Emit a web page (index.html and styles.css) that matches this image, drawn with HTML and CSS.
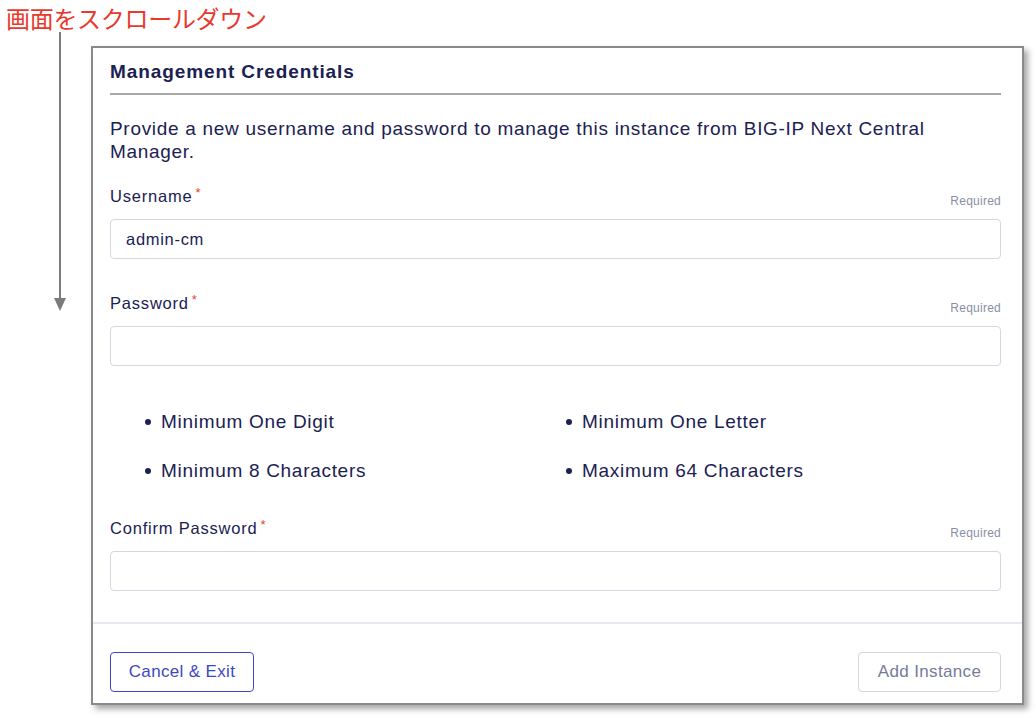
FILE: index.html
```html
<!DOCTYPE html>
<html lang="ja">
<head>
<meta charset="utf-8">
<title>Management Credentials</title>
<link rel="stylesheet" href="styles.css">
</head>
<body>
<div class="note">画面をスクロールダウン</div>
<div class="stage">
  <div class="arrow-col">
    <div class="arrow-line"></div>
    <div class="arrow-head"></div>
  </div>
  <div class="card">
    <div class="card-body">
      <h2 class="title">Management Credentials</h2>
      <p class="desc">Provide a new username and password to manage this instance from BIG-IP Next Central Manager.</p>

      <div class="field">
        <div class="label-row">
          <span class="label">Username<span class="star">*</span></span>
          <span class="req">Required</span>
        </div>
        <div class="input">admin-cm</div>
      </div>

      <div class="field">
        <div class="label-row">
          <span class="label">Password<span class="star">*</span></span>
          <span class="req">Required</span>
        </div>
        <div class="input"></div>
      </div>

      <ul class="rules">
        <li>Minimum One Digit</li>
        <li>Minimum One Letter</li>
        <li>Minimum 8 Characters</li>
        <li>Maximum 64 Characters</li>
      </ul>

      <div class="field field-confirm">
        <div class="label-row">
          <span class="label">Confirm Password<span class="star">*</span></span>
          <span class="req">Required</span>
        </div>
        <div class="input"></div>
      </div>
    </div>
    <div class="card-foot">
      <button class="btn btn-outline">Cancel &amp; Exit</button>
      <button class="btn btn-disabled">Add Instance</button>
    </div>
  </div>
</div>
</body>
</html>
```

FILE: styles.css
```css
* { box-sizing: border-box; }
html, body { margin: 0; padding: 0; background: #ffffff; }
body {
  font-family: "Liberation Sans", Arial, "Noto Sans CJK JP", sans-serif;
  color: #1b2152;
  width: 1036px;
  height: 718px;
  overflow: hidden;
}
.note {
  font-family: "Noto Sans CJK JP", sans-serif;
  color: #e8392c;
  font-size: 24px;
  line-height: 28px;
  height: 32px;
  padding: 4px 0 0 6px;
  letter-spacing: -0.3px;
}
.stage {
  display: flex;
  align-items: flex-start;
}
.arrow-col {
  width: 91px;
  display: flex;
  flex-direction: column;
  align-items: center;
  padding-left: 54px;
  padding-right: 25px;
}
.arrow-line {
  width: 2px;
  height: 266px;
  background: #7b7b7b;
}
.arrow-head {
  width: 0;
  height: 0;
  border-left: 6px solid transparent;
  border-right: 6px solid transparent;
  border-top: 13px solid #7b7b7b;
}
.card {
  margin-top: 14px;
  width: 933px;
  height: 659px;
  border: 2px solid #8a8a8a;
  background: #fff;
  box-shadow: 4px 4px 6px rgba(0,0,0,0.35);
  display: flex;
  flex-direction: column;
}
.card-body {
  padding: 12px 21px 0 17px;
  flex: 1;
  border-bottom: 2px solid #e8e9f0;
}
.title {
  margin: 0;
  font-size: 19px;
  font-weight: 700;
  letter-spacing: 0.9px;
  line-height: 24px;
  padding-bottom: 9px;
  border-bottom: 2px solid #a9a9a9;
  color: #1b2152;
}
.desc {
  margin: 0;
  padding-top: 22px;
  font-size: 19px;
  letter-spacing: 0.7px;
  line-height: 23px;
  color: #1b2152;
}
.field { margin-top: 33px; }
.desc + .field { margin-top: 22px; }
.label-row {
  display: flex;
  justify-content: space-between;
  align-items: flex-start;
  height: 34px;
}
.label {
  font-size: 16.5px;
  letter-spacing: 0.8px;
  line-height: 22px;
}
.star {
  color: #e0442f;
  font-size: 13px;
  position: relative;
  top: -5px;
  margin-left: 3px;
}
.req {
  font-size: 12px;
  letter-spacing: 0.25px;
  color: #8a8ea8;
  line-height: 14px;
  margin-top: 9px;
}
.input {
  height: 40px;
  border: 1px solid #d5d7e2;
  border-radius: 4px;
  padding: 0 15px;
  font-size: 16.5px;
  letter-spacing: 0.7px;
  line-height: 38px;
  color: #1b2152;
}
.rules {
  list-style: none;
  margin: 0;
  padding: 45px 0 0 35px;
  display: grid;
  grid-template-columns: 421px 421px;
  row-gap: 27px;
  font-size: 19px;
  letter-spacing: 0.7px;
  line-height: 22px;
}
.rules li {
  display: flex;
  align-items: center;
  color: #1b2152;
}
.rules li::before {
  content: "";
  width: 6px;
  height: 6px;
  border-radius: 50%;
  background: #1b2152;
  margin-right: 10px;
  flex: none;
}
.field-confirm { margin-top: 35px; }
.card-foot {
  height: 79px;
  display: flex;
  justify-content: space-between;
  align-items: flex-start;
  padding: 28px 21px 0 17px;
}
.btn {
  font-family: "Liberation Sans", Arial, sans-serif;
  height: 40px;
  border-radius: 4px;
  background: #fff;
  font-size: 17px;
  letter-spacing: 0.35px;
  padding: 0;
}
.btn-outline {
  border: 1px solid #3b49bf;
  color: #3b49bf;
  width: 144px;
}
.btn-disabled {
  border: 1px solid #d5d7e2;
  color: #767b98;
  width: 143px;
}
```
